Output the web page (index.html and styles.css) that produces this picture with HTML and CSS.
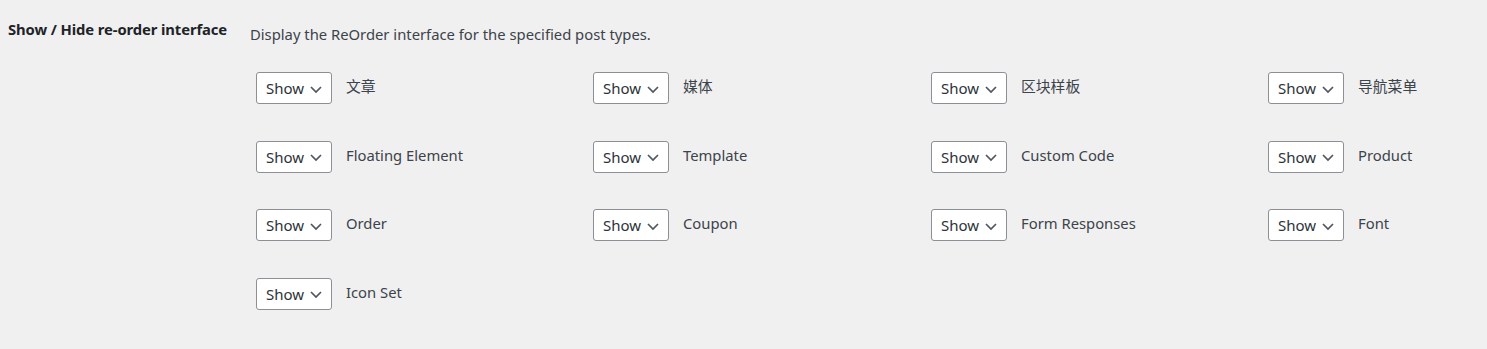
FILE: index.html
```html
<!DOCTYPE html>
<html lang="zh-CN">
<head>
  <meta charset="UTF-8" />
  <meta name="viewport" content="width=device-width, initial-scale=1" />
  <title>ReOrder Settings</title>
  <link rel="stylesheet" href="styles.css">
</head>
<body>
  <div class="setting-row">
    <div class="setting-label">Show / Hide re-order interface</div>
    <div class="setting-field">
      <p class="description">Display the ReOrder interface for the specified post types.</p>
      <div class="type-grid" id="typeGrid"></div>
    </div>
  </div>

<script>
  const grid = document.getElementById('typeGrid');
  const tipos = [
    '文章', '媒体', '区块样板', '导航菜单',
    'Floating Element', 'Template', 'Custom Code', 'Product',
    'Order', 'Coupon', 'Form Responses', 'Font',
    'Icon Set'
  ];

  // um bloco por tipo de post
  tipos.forEach(nome => {
    const div = document.createElement('div');
    div.classList.add('type-item');
    div.innerHTML = `
      <div class="fake-select">
        <span>Show</span>
        <svg width="14" height="14" viewBox="0 0 14 14"><path d="M2 5 L7 10 L12 5" fill="none" stroke="#50575e" stroke-width="1.7"/></svg>
      </div>
      <span class="type-name">${nome}</span>
    `;
    grid.appendChild(div);
  });
</script>
</body>
</html>
```

FILE: styles.css
```css
body {
  margin: 0;
  background: #f0f0f1;
  color: #3c434a;
  font-family: "Noto Sans", "Noto Sans CJK SC", sans-serif;
  font-size: 15px;
}
.setting-row {
  display: flex;
  padding: 20px 0 0 8px;
}
.setting-label {
  width: 242px;
  flex-shrink: 0;
  font-weight: bold;
  color: #1d2327;
  line-height: 19px;
  font-size: 14.8px;
  letter-spacing: -0.1px;
}
.setting-field {
  flex: 1;
  min-width: 0;
  padding-top: 4px;
}
.description {
  margin: 0;
  line-height: 21px;
  font-size: 14.8px;
}
.type-grid {
  display: grid;
  grid-template-columns: 337px 338px 337px minmax(0, 1fr);
  grid-auto-rows: 68.5px;
  margin-top: 27px;
}
.type-item {
  display: flex;
  align-items: flex-start;
  padding-left: 6px;
  white-space: nowrap;
}
.fake-select {
  width: 76px;
  height: 32px;
  flex-shrink: 0;
  box-sizing: border-box;
  border: 1px solid #8c8f94;
  border-radius: 3px;
  background: #fff;
  color: #2c3338;
  display: flex;
  align-items: center;
  justify-content: space-between;
  padding: 0 8px 0 9px;
  font-size: 15px;
}
.fake-select svg {
  display: block;
  margin-top: 1px;
}
.type-name {
  margin-left: 14px;
  line-height: 21px;
  margin-top: 4px;
  font-size: 14.8px;
}
```
